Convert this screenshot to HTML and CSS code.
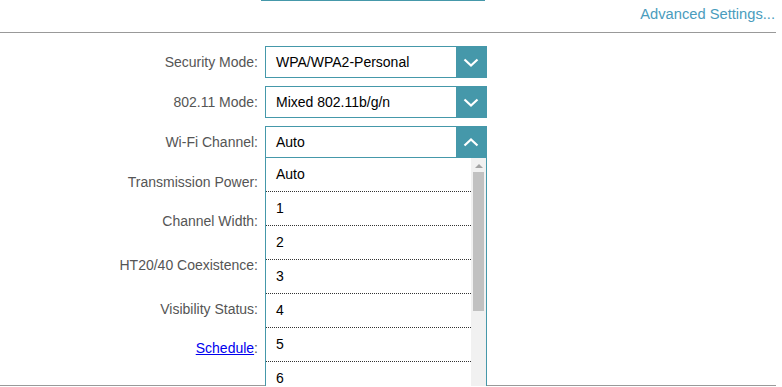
FILE: index.html
```html
<!DOCTYPE html>
<html lang="en">
<head>
  <meta charset="UTF-8">
  <title>Wireless Settings</title>
  <link rel="stylesheet" href="styles.css">
</head>
<body>
  <div class="page">
    <div class="prev-field"></div>
    <div class="advanced">
      <a class="adv-link">Advanced Settings...</a>
    </div>

    <div class="settings">
      <div class="row">
        <label>Security Mode:</label>
        <div class="select">
          <span class="value">WPA/WPA2-Personal</span>
          <span class="arrow"><svg width="16" height="9" viewBox="0 0 16 9"><polyline points="1.5,1.5 8,7.5 14.5,1.5" fill="none" stroke="#fff" stroke-width="2.2"/></svg></span>
        </div>
      </div>
      <div class="row">
        <label>802.11 Mode:</label>
        <div class="select">
          <span class="value">Mixed 802.11b/g/n</span>
          <span class="arrow"><svg width="16" height="9" viewBox="0 0 16 9"><polyline points="1.5,1.5 8,7.5 14.5,1.5" fill="none" stroke="#fff" stroke-width="2.2"/></svg></span>
        </div>
      </div>
      <div class="row">
        <label>Wi-Fi Channel:</label>
        <div class="select open">
          <span class="value">Auto</span>
          <span class="arrow"><svg width="16" height="9" viewBox="0 0 16 9"><polyline points="1.5,7.5 8,1.5 14.5,7.5" fill="none" stroke="#fff" stroke-width="2.2"/></svg></span>
          <div class="dropdown">
            <ul class="items">
              <li>Auto</li>
              <li>1</li>
              <li>2</li>
              <li>3</li>
              <li>4</li>
              <li>5</li>
              <li>6</li>
              <li>7</li>
            </ul>
            <div class="scrollbar">
              <div class="sb-up"></div>
              <div class="sb-thumb"></div>
            </div>
          </div>
        </div>
      </div>
      <div class="row gap-sm">
        <label>Transmission Power:</label>
      </div>
      <div class="row gap-lg">
        <label>Channel Width:</label>
      </div>
      <div class="row gap-lg">
        <label>HT20/40 Coexistence:</label>
      </div>
      <div class="row gap-sm">
        <label>Visibility Status:</label>
      </div>
      <div class="row last">
        <label><a href="#">Schedule</a>:</label>
      </div>
    </div>
  </div>
</body>
</html>
```

FILE: styles.css
```css
* {
  margin: 0;
  padding: 0;
  box-sizing: border-box;
}

html, body {
  overflow: hidden;
}

body {
  background: #fff;
  font-family: 'Liberation Sans', Arial, sans-serif;
  font-size: 14px;
}

.page {
  width: 776px;
}

.prev-field {
  margin-left: 261px;
  width: 224px;
  border-top: 1px solid #4598aa;
}

.advanced {
  height: 32px;
  display: flex;
  justify-content: flex-end;
  align-items: flex-start;
  padding-top: 5px;
  padding-right: 1px;
  border-bottom: 1px solid #999;
}

.adv-link {
  color: #4a9cbd;
  font-size: 14.7px;
  line-height: 16px;
  cursor: pointer;
}

.settings {
  padding-top: 13px;
  padding-bottom: 21px;
  border-bottom: 1px solid #999;
}

.row {
  display: flex;
  align-items: center;
  height: 32px;
  margin-bottom: 8px;
}

.row.gap-sm {
  margin-bottom: 7px;
}

.row.gap-lg {
  margin-bottom: 12px;
}

.row.last {
  margin-bottom: 0;
}

.row label {
  width: 258px;
  margin-right: 7px;
  text-align: right;
  color: #555;
}

.row label a {
  color: #0000ee;
}

.select {
  position: relative;
  width: 222px;
  height: 32px;
  border: 1px solid #4598aa;
  display: flex;
  align-items: center;
  background: #fff;
}

.select .value {
  flex: 1;
  padding-left: 10px;
  color: #000;
}

.select .arrow {
  width: 30px;
  height: 100%;
  background: #4598aa;
  display: flex;
  align-items: center;
  justify-content: center;
}

/* open list of the Wi-Fi channel select, drawn over the rows below */
.dropdown {
  position: absolute;
  top: 31px;
  left: -1px;
  width: 222px;
  height: 229px;
  display: flex;
  background: #fff;
  border: 1px solid #4598aa;
  border-top: none;
  border-bottom: none;
  overflow: hidden;
  z-index: 2;
}

.items {
  flex: 1;
  list-style: none;
}

.items li {
  height: 34px;
  line-height: 33px;
  padding-left: 10px;
  color: #000;
  border-bottom: 1px dotted #333;
}

.scrollbar {
  width: 15px;
  background: #f1f1f1;
  display: flex;
  flex-direction: column;
  align-items: center;
}

.sb-up {
  margin-top: 6px;
  width: 0;
  height: 0;
  border-left: 4px solid transparent;
  border-right: 4px solid transparent;
  border-bottom: 4px solid #a3a3a3;
}

.sb-thumb {
  margin-top: 4px;
  width: 11px;
  height: 139px;
  background: #c1c1c1;
}
```
